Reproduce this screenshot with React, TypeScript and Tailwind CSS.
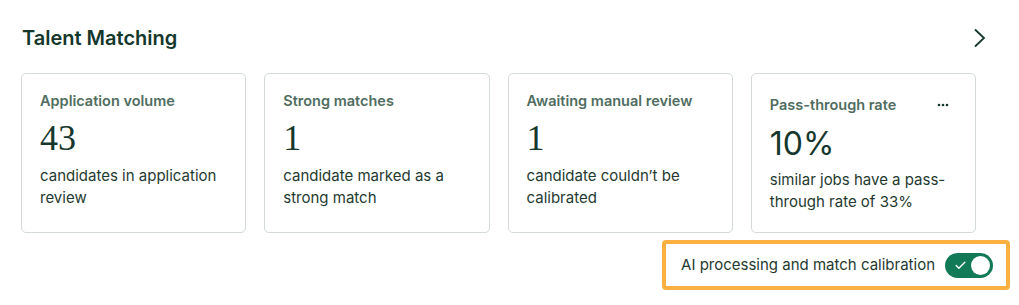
import { Check } from "lucide-react";

interface Metric {
  label: string;
  value: string;
  description: string;
  menu?: boolean;
}

const metrics: Metric[] = [
  { label: "Application volume", value: "43", description: "candidates in application review" },
  { label: "Strong matches", value: "1", description: "candidate marked as a strong match" },
  { label: "Awaiting manual review", value: "1", description: "candidate couldn\u2019t be calibrated" },
  { label: "Pass-through rate", value: "10%", description: "similar jobs have a pass-through rate of 33%", menu: true },
];

function MetricCard({ metric }: { metric: Metric }) {
  return (
    <div className="h-[160px] rounded-[5px] border border-[#d3dad7] bg-white px-[18px] pt-[17px]">
      <div className={`flex items-center justify-between ${metric.menu ? "h-[27px]" : "h-[20px]"}`}>
        <span className="text-[14.5px] font-semibold leading-[20px] text-[#4f6d60]">{metric.label}</span>
        {metric.menu && (
          <button className="mr-[4px] flex h-[20px] w-[20px] items-center justify-center">
            <svg width="12" height="4" viewBox="0 0 12 4" fill="#15372c">
              <circle cx="2" cy="2" r="1.3" />
              <circle cx="6" cy="2" r="1.3" />
              <circle cx="10" cy="2" r="1.3" />
            </svg>
          </button>
        )}
      </div>
      <div
        className={`leading-[38px] text-[#15372c] ${
          metric.menu
            ? "mt-[7px] text-[32px] font-['Inter',sans-serif] font-normal"
            : "mt-[8px] text-[36px] font-['Liberation_Serif',serif]"
        }`}
      >
        {metric.value}
      </div>
      <p className={`${metric.menu ? "mt-[6px]" : "mt-[8px]"} text-[15px] leading-[22px] text-[#1f3a30]`}>
        {metric.description}
      </p>
    </div>
  );
}

export default function App() {
  return (
    <div className="min-h-[305px] w-[1019px] bg-white pl-[21px] pt-[24px] font-['Inter',sans-serif]">
      <div className="flex w-[966px] items-center justify-between">
        <h2 className="pl-[1px] text-[20px] font-semibold leading-[28px] text-[#15372c]">Talent Matching</h2>
        <svg width="14" height="20" viewBox="0 0 14 20" fill="none" stroke="#15372c" strokeWidth="1.8">
          <polyline points="2,1.5 11,10 2,18.5" />
        </svg>
      </div>

      <div className="mt-[21px] grid w-[955px] grid-cols-4 gap-[18px]">
        {metrics.map((m) => (
          <MetricCard key={m.label} metric={m} />
        ))}
      </div>

      <div className="mr-[9px] mt-[7px] flex justify-end">
        <div className="flex h-[50px] items-center gap-[10px] rounded-[4px] border-[4px] border-[#fbb03f] pl-[15px] pr-[13px]">
          <span className="text-[15px] leading-[22px] text-[#1f3a30]">AI processing and match calibration</span>
          <div className="flex h-[25px] w-[48px] items-center justify-between rounded-full bg-[#127a57] pl-[9px] pr-[3px]">
            <Check size={13} strokeWidth={2.5} color="white" />
            <span className="h-[19px] w-[19px] rounded-full bg-white" />
          </div>
        </div>
      </div>
    </div>
  );
}
